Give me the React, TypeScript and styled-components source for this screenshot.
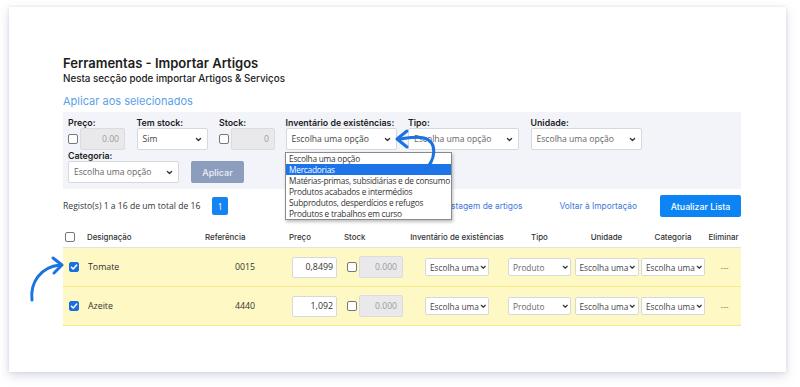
import React from "react";
import styled, { createGlobalStyle } from "styled-components";

const GlobalStyle = createGlobalStyle`
  html, body { margin: 0; padding: 0; background: #ffffff; }
  body { font-family: "Open Sans", "Noto Sans", sans-serif; color: #222; }
  * { box-sizing: border-box; }
`;

const HEAD = `"Inter", "Open Sans", sans-serif`;
const BODY = `"Open Sans", "Noto Sans", sans-serif`;

const Page = styled.div`
  width: 800px;
  height: 387px;
  padding: 7px 14px 0 9px;
  position: relative;
  overflow: hidden;
`;

const Card = styled.div`
  width: 777px;
  height: 365px;
  background: #fff;
  box-shadow: 0 4px 10px rgba(150, 155, 185, 0.35), 0 0 3px rgba(150, 155, 185, 0.25);
  padding: 47px 45px 0 54px;
  position: relative;
`;

const Title = styled.h1`
  margin: 0;
  font-family: ${HEAD};
  font-size: 13px;
  font-weight: 600;
  line-height: 18px;
  color: #1c1c1c;
`;

const Subtitle = styled.p`
  margin: 0;
  font-family: ${HEAD};
  font-size: 9.8px;
  font-weight: 500;
  line-height: 13px;
  color: #222;
`;

const SectionLink = styled.div`
  margin-top: 9px;
  font-family: ${HEAD};
  font-size: 11px;
  line-height: 15px;
  color: #5b9fea;
`;

const Panel = styled.div`
  margin-top: 3px;
  background: #f3f4f9;
  padding: 5px 5px 6px 5px;
  position: relative;
`;

const FieldRow = styled.div`
  display: flex;
  gap: 11.5px;
  align-items: flex-end;
`;

const Field = styled.div<{ $w: number }>`
  width: ${(p) => p.$w}px;
  flex: none;
  display: flex;
  flex-direction: column;
`;

const Label = styled.div`
  font-family: ${HEAD};
  font-size: 8.8px;
  font-weight: 600;
  line-height: 11px;
  color: #1c1c1c;
  height: 11px;
  white-space: nowrap;
`;

const Inline = styled.div`
  display: flex;
  align-items: center;
  gap: 2px;
  height: 22px;
`;

const Box = styled.span<{ $checked?: boolean; $size?: number }>`
  width: ${(p) => p.$size ?? 10}px;
  height: ${(p) => p.$size ?? 10}px;
  flex: none;
  border-radius: 2px;
  border: 1px solid ${(p) => (p.$checked ? "#1a6fe0" : "#777")};
  background: ${(p) => (p.$checked ? "#1a6fe0" : "#fff")};
  display: inline-flex;
  align-items: center;
  justify-content: center;
`;

const DisabledInput = styled.div<{ $w: number; $h?: number }>`
  width: ${(p) => p.$w}px;
  height: ${(p) => p.$h ?? 22}px;
  flex: none;
  background: #e9e9ec;
  border: 1px solid #dcdce0;
  border-radius: 2px;
  font-family: ${BODY};
  font-size: 8.6px;
  color: #9a9a9a;
  display: flex;
  align-items: center;
  justify-content: flex-end;
  padding-right: 5px;
`;

const SelectBox = styled.div<{ $w?: number; $h?: number; $muted?: boolean; $fs?: number; $compact?: boolean }>`
  width: ${(p) => (p.$w ? `${p.$w}px` : "100%")};
  height: ${(p) => p.$h ?? 22}px;
  flex: none;
  background: #fff;
  border: 1px solid #d6d8de;
  border-radius: 2px;
  display: flex;
  align-items: center;
  justify-content: space-between;
  gap: 1px;
  padding: ${(p) => (p.$compact ? "0 2px 0 4px" : "0 5px")};
  font-family: ${BODY};
  font-size: ${(p) => p.$fs ?? 8.6}px;
  color: ${(p) => (p.$muted ? "#666" : "#444")};
  white-space: nowrap;
  overflow: hidden;
  position: relative;
`;

const ApplyButton = styled.div`
  width: 53px;
  height: 22px;
  flex: none;
  background: #8d9dbd;
  border-radius: 2px;
  color: #eef1f8;
  font-family: ${HEAD};
  font-size: 9px;
  font-weight: 500;
  display: flex;
  align-items: center;
  justify-content: center;
`;

const RowTwo = styled.div`
  display: flex;
  gap: 12px;
  align-items: flex-end;
`;

const DropList = styled.div`
  position: absolute;
  left: 222px;
  top: 40px;
  width: 167px;
  background: #fff;
  border: 1px solid #8a8a8a;
  box-shadow: 1px 2px 3px rgba(0, 0, 0, 0.25);
  padding: 0;
  z-index: 5;
  overflow: hidden;
`;

const DropItem = styled.div<{ $active?: boolean }>`
  height: 11px;
  line-height: 11px;
  padding-left: 3px;
  font-family: ${BODY};
  font-size: 8.3px;
  letter-spacing: -0.22px;
  white-space: nowrap;
  color: ${(p) => (p.$active ? "#fff" : "#333")};
  background: ${(p) => (p.$active ? "#1c74e8" : "transparent")};
`;

const Toolbar = styled.div`
  margin-top: 6px;
  height: 22px;
  display: flex;
  align-items: center;
  white-space: nowrap;
`;

const Records = styled.span`
  flex: none;
  font-family: ${BODY};
  font-size: 8.6px;
  color: #333;
`;

const PageBtn = styled.span`
  flex: none;
  margin-left: 12px;
  width: 16px;
  height: 18px;
  background: #1484f2;
  color: #fff;
  border-radius: 2px;
  font-family: ${BODY};
  font-size: 8.5px;
  display: inline-flex;
  align-items: center;
  justify-content: center;
`;

const TextLink = styled.span<{ $ml: number }>`
  flex: none;
  margin-left: ${(p) => p.$ml}px;
  font-family: ${HEAD};
  font-size: 8.4px;
  color: #3f78d8;
`;

const PrimaryBtn = styled.span`
  flex: none;
  margin-left: auto;
  width: 81px;
  height: 22px;
  background: #0c84f4;
  color: #fff;
  border-radius: 2px;
  font-family: ${HEAD};
  font-size: 8.8px;
  font-weight: 500;
  display: inline-flex;
  align-items: center;
  justify-content: center;
`;

const COLS = "20px 117px 88px 52px 68px 98px 67px 67px 66px 35px";

const HeadRow = styled.div`
  margin-top: 10px;
  height: 21px;
  display: grid;
  grid-template-columns: ${COLS};
  align-items: center;
  border-bottom: 1px solid #e3e3e6;
  font-family: ${HEAD};
  font-size: 7.9px;
  font-weight: 500;
  color: #333;
`;

const Cell = styled.div<{ $align?: "left" | "center" | "right"; $pl?: number; $pr?: number }>`
  display: flex;
  align-items: center;
  justify-content: ${(p) =>
    p.$align === "center" ? "center" : p.$align === "right" ? "flex-end" : "flex-start"};
  padding-left: ${(p) => p.$pl ?? 0}px;
  padding-right: ${(p) => p.$pr ?? 0}px;
  white-space: nowrap;
  gap: 2px;
`;

const DataRow = styled.div`
  height: 39px;
  display: grid;
  grid-template-columns: ${COLS};
  align-items: center;
  background: #fef9c4;
  border-bottom: 1px solid #f5e98c;
  font-family: ${BODY};
  font-size: 8.8px;
  color: #333;
`;

const PriceInput = styled.div`
  width: 45px;
  height: 21px;
  margin-left: 4px;
  background: #fff;
  border: 1px solid #d6d8de;
  border-radius: 2px;
  display: flex;
  align-items: center;
  justify-content: flex-end;
  padding-right: 3px;
  font-size: 8.8px;
  color: #333;
`;

const Dash = styled.span`
  color: #888;
  font-size: 8.5px;
  padding-left: 2px;
`;

const Overlay = styled.svg`
  position: absolute;
  pointer-events: none;
  z-index: 10;
`;

const Check = () => (
  <svg width="8" height="8" viewBox="0 0 8 8">
    <path d="M1.4 4.2 L3.2 6 L6.7 2" stroke="#fff" strokeWidth="1.5" fill="none" strokeLinecap="round" strokeLinejoin="round" />
  </svg>
);

const Chevron = ({ size = 7 }: { size?: number }) => (
  <svg width={size} height={size} viewBox="0 0 10 10" style={{ flex: "none" }}>
    <path d="M2 3.5 L5 6.5 L8 3.5" stroke="#333" strokeWidth="1.8" fill="none" strokeLinecap="round" strokeLinejoin="round" />
  </svg>
);

const Select = ({
  text,
  w,
  h,
  muted,
  fs,
  compact,
}: {
  text: string;
  w?: number;
  h?: number;
  muted?: boolean;
  fs?: number;
  compact?: boolean;
}) => (
  <SelectBox $w={w} $h={h} $muted={muted} $fs={fs} $compact={compact}>
    <span>{text}</span>
    <Chevron size={compact ? 6.5 : 7} />
  </SelectBox>
);

const options = [
  "Escolha uma opção",
  "Mercadorias",
  "Matérias-primas, subsidiárias e de consumo",
  "Produtos acabados e intermédios",
  "Subprodutos, desperdícios e refugos",
  "Produtos e trabalhos em curso",
];

const rows = [
  { name: "Tomate", ref: "0015", price: "0,8499" },
  { name: "Azeite", ref: "4440", price: "1,092" },
];

export default function App() {
  return (
    <>
      <GlobalStyle />
      <Page>
        <Card>
          <Title>Ferramentas - Importar Artigos</Title>
          <Subtitle>Nesta secção pode importar Artigos &amp; Serviços</Subtitle>
          <SectionLink>Aplicar aos selecionados</SectionLink>
          <Panel>
            <FieldRow>
              <Field $w={57}>
                <Label>Preço:</Label>
                <Inline>
                  <Box />
                  <DisabledInput $w={45}>0.00</DisabledInput>
                </Inline>
              </Field>
              <Field $w={71}>
                <Label>Tem stock:</Label>
                <Select text="Sim" />
              </Field>
              <Field $w={55}>
                <Label>Stock:</Label>
                <Inline>
                  <Box />
                  <DisabledInput $w={44}>0</DisabledInput>
                </Inline>
              </Field>
              <Field $w={111}>
                <Label>Inventário de existências:</Label>
                <Select text="Escolha uma opção" />
              </Field>
              <Field $w={111}>
                <Label>Tipo:</Label>
                <Select text="Escolha uma opção" muted />
              </Field>
              <Field $w={111}>
                <Label>Unidade:</Label>
                <Select text="Escolha uma opção" muted />
              </Field>
            </FieldRow>
            <RowTwo>
              <Field $w={111}>
                <Label>Categoria:</Label>
                <Select text="Escolha uma opção" muted />
              </Field>
              <ApplyButton>Aplicar</ApplyButton>
            </RowTwo>
            <DropList>
              {options.map((o, i) => (
                <DropItem key={o} $active={i === 1}>
                  {o}
                </DropItem>
              ))}
            </DropList>
          </Panel>
          <Toolbar>
            <Records>Registo(s) 1 a 16 de um total de 16</Records>
            <PageBtn>1</PageBtn>
            <TextLink $ml={216}>Listagem de artigos</TextLink>
            <TextLink $ml={37}>Voltar à Importação</TextLink>
            <PrimaryBtn>Atualizar Lista</PrimaryBtn>
          </Toolbar>
          <HeadRow>
            <Cell $pl={2}>
              <Box />
            </Cell>
            <Cell $pl={4}>Designação</Cell>
            <Cell $pl={5}>Referência</Cell>
            <Cell $pl={1}>Preço</Cell>
            <Cell $pl={4}>Stock</Cell>
            <Cell $align="center">Inventário de existências</Cell>
            <Cell $align="center">Tipo</Cell>
            <Cell $align="center">Unidade</Cell>
            <Cell $align="center">Categoria</Cell>
            <Cell $align="center">Eliminar</Cell>
          </HeadRow>
          {rows.map((r) => (
            <DataRow key={r.name}>
              <Cell $pl={6}>
                <Box $checked>
                  <Check />
                </Box>
              </Cell>
              <Cell $pl={5}>{r.name}</Cell>
              <Cell $align="right" $pr={33}>{r.ref}</Cell>
              <Cell>
                <PriceInput>{r.price}</PriceInput>
              </Cell>
              <Cell $pl={7}>
                <Box />
                <DisabledInput $w={44} $h={22}>0.000</DisabledInput>
              </Cell>
              <Cell $align="center">
                <Select text="Escolha uma" w={64} h={18} fs={8.3} compact />
              </Cell>
              <Cell $align="center">
                <Select text="Produto" w={63} h={18} fs={8.3} compact muted />
              </Cell>
              <Cell $align="center">
                <Select text="Escolha uma" w={64} h={18} fs={8.3} compact />
              </Cell>
              <Cell $align="center">
                <Select text="Escolha uma" w={64} h={18} fs={8.3} compact />
              </Cell>
              <Cell $align="center">
                <Dash>---</Dash>
              </Cell>
            </DataRow>
          ))}
        </Card>
        <Overlay width="50" height="60" viewBox="0 0 50 60" style={{ left: 390, top: 126 }}>
          <path d="M34 45 C46 34 48 16 34 12 C26 10 18 12 10 13" stroke="#1a73e0" strokeWidth="3" fill="none" strokeLinecap="round" />
          <path d="M17 5 L7 13 L17 21" stroke="#1a73e0" strokeWidth="3" fill="none" strokeLinecap="round" strokeLinejoin="round" />
        </Overlay>
        <Overlay width="50" height="50" viewBox="0 0 50 50" style={{ left: 22, top: 255 }}>
          <path d="M10 45 C8 28 18 12 38 10" stroke="#1a73e0" strokeWidth="3" fill="none" strokeLinecap="round" />
          <path d="M31 3 L40 10 L32 18" stroke="#1a73e0" strokeWidth="3" fill="none" strokeLinecap="round" strokeLinejoin="round" />
        </Overlay>
      </Page>
    </>
  );
}
